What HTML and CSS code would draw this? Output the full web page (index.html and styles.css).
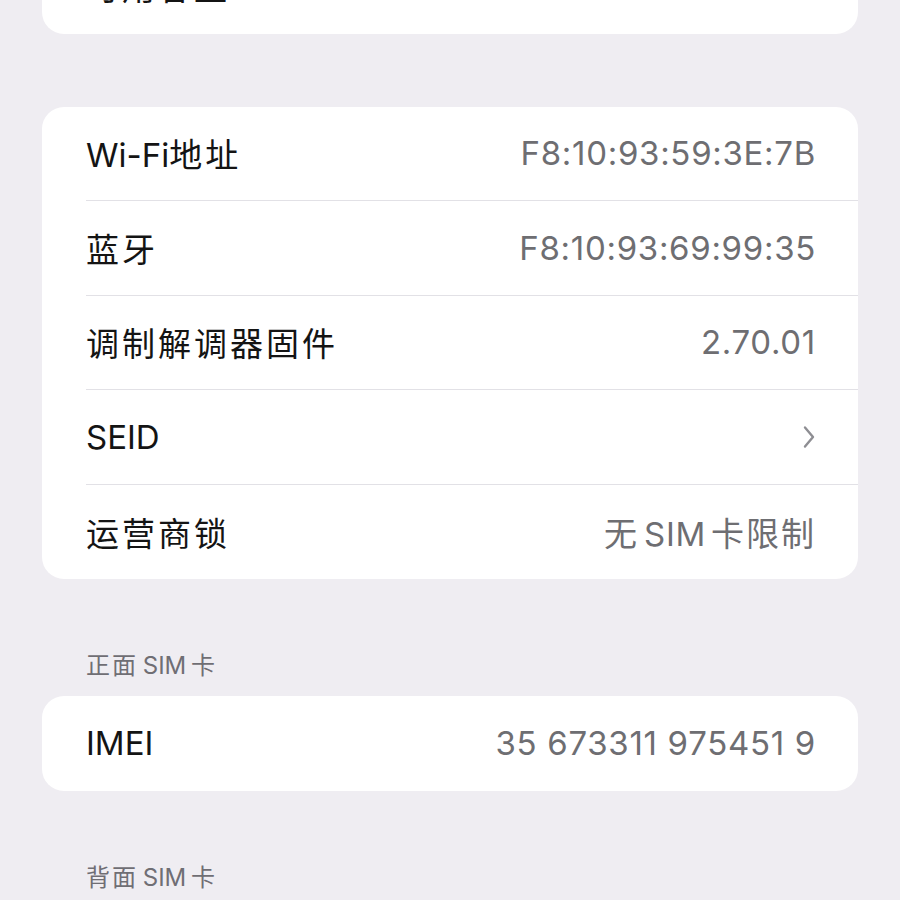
FILE: index.html
```html
<html>
<head>
<meta charset="utf-8">
<meta name="viewport" content="width=device-width, initial-scale=1.0">
<link rel="stylesheet" href="styles.css">
</head>
<body>
<div class="page">

<div class="card card-top">
<div class="row"><span class="label cn">可用容量</span><span class="value">1.55 GB</span></div>
</div>

<div class="card">
<div class="row"><span class="label">Wi-Fi<span class="cn">地址</span></span><span class="value">F8:10:93:59:3E:7B</span></div>
<div class="row"><span class="label cn">蓝牙</span><span class="value">F8:10:93:69:99:35</span></div>
<div class="row"><span class="label cn">调制解调器固件</span><span class="value">2.70.01</span></div>
<div class="row"><span class="label">SEID</span>
<svg class="chev" width="14" height="24" viewBox="0 0 14 24"><path d="M3 2.5 L11 12 L3 21.5" fill="none" stroke="#8e8e93" stroke-width="2.4" stroke-linecap="round" stroke-linejoin="round"/></svg>
</div>
<div class="row"><span class="label cn">运营商锁</span><span class="value tight"><span class="cn">无</span> SIM <span class="cn">卡限制</span></span></div>
</div>

<div class="section"><span class="cn">正面</span> SIM <span class="cn">卡</span></div>
<div class="card">
<div class="row"><span class="label">IMEI</span><span class="value">35 673311 975451 9</span></div>
</div>

<div class="section"><span class="cn">背面</span> SIM <span class="cn">卡</span></div>

</div>
</body>
</html>
```

FILE: styles.css
```css
*{
margin:0;
padding:0;
box-sizing:border-box;
}
body{
background:#efedf2;
font-family:Inter,"Noto Sans CJK SC",sans-serif;
overflow:hidden;
}
.page{
display:flex;
flex-direction:column;
padding:0 42px;
margin-top:-61px;
}
.card{
background:#fff;
border-radius:22px;
}
.card-top{
margin-bottom:73px;
}
.row{
height:94.5px;
display:flex;
align-items:center;
justify-content:space-between;
margin-left:44px;
padding-right:42px;
border-bottom:1.5px solid #e2e1e6;
}
.row:last-child{
border-bottom:none;
}
.label{
font-size:33px;
color:#141414;
}
.value{
font-size:33px;
color:#6e6e72;
letter-spacing:0.7px;
}
.cn{
letter-spacing:3px;
}
.value .cn{
letter-spacing:2px;
}
.tight{
word-spacing:-5px;
}
.chev{
margin-right:0;
}
.section{
font-size:24px;
line-height:28px;
color:#6f6e74;
padding:73px 0 16px 44px;
word-spacing:-2px;
}
.section .cn{
letter-spacing:2px;
}
```
